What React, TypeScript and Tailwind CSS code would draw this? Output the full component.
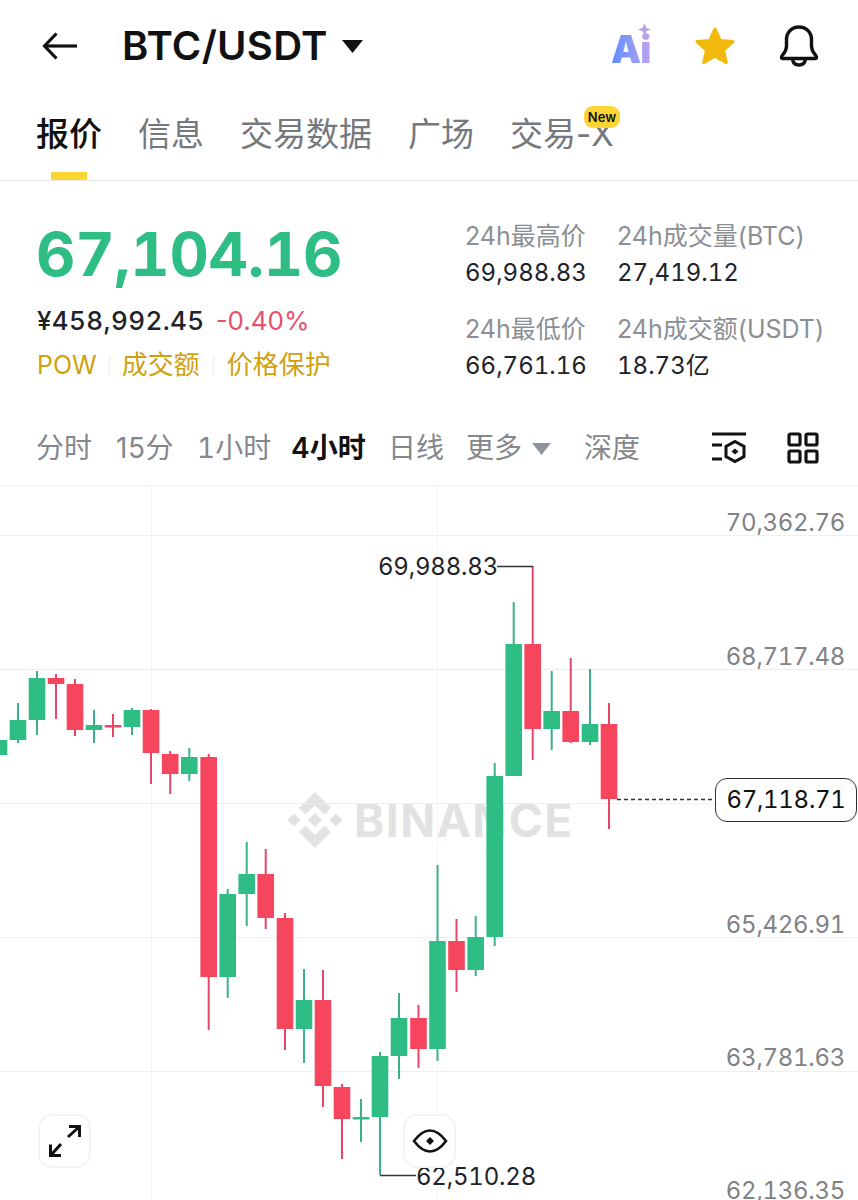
import React from "react";

type C = [number, "g" | "r", number, number, number, number];
// x, colour, wickTop, wickBottom, bodyTop, bodyBottom
const candles: C[] = [
  [-1, "g", 735, 760, 740, 755],
  [18, "g", 703, 743, 720, 740],
  [37, "g", 671, 735, 678, 720],
  [56, "r", 674, 719, 678, 684],
  [75, "r", 679, 736, 684, 730],
  [94, "g", 710, 743, 725, 730],
  [113, "r", 714, 737, 725, 727.5],
  [132, "g", 708, 735, 710, 727],
  [151, "r", 709, 784, 710, 753],
  [170.2, "r", 751, 794, 754, 774],
  [189.3, "g", 748, 781, 757, 774],
  [208.7, "r", 754, 1030, 757, 977],
  [227.7, "g", 889, 998, 894, 977],
  [246.7, "g", 842, 926, 874, 894],
  [265.7, "r", 849, 929, 874, 918],
  [285, "r", 913, 1050, 918, 1029],
  [304, "g", 969, 1063, 1000, 1029],
  [323, "r", 970, 1107, 1000, 1086],
  [342, "r", 1084, 1159, 1087, 1119],
  [361, "g", 1099, 1142, 1117, 1119.5],
  [380, "g", 1052, 1175, 1056, 1117],
  [399, "g", 993, 1079, 1018, 1056],
  [418.5, "r", 1005, 1068, 1018, 1049],
  [437.5, "g", 865, 1061, 941, 1049],
  [456.5, "r", 919, 992, 941, 970],
  [475.7, "g", 916, 976, 937, 970],
  [494.7, "g", 763, 946, 776, 937],
  [513.7, "g", 602, 776, 644, 776],
  [532.7, "r", 566, 760, 644, 729],
  [551.7, "g", 671, 750, 711, 729],
  [570.7, "r", 658, 743, 711, 742],
  [590, "g", 669, 745, 724, 742],
  [609, "r", 703, 829, 724, 799],
];

const Font = "[font-family:Inter,'Noto_Sans_CJK_SC',sans-serif]";

function Stat({ label, value, w }: { label: string; value: string; w: string }) {
  return (
    <div className={`${w} flex flex-col gap-[9px]`}>
      <div className="text-[25px] leading-[28px] text-[#8b8f94] whitespace-nowrap">{label}</div>
      <div className="text-[24px] leading-[28px] text-[#1e2329] whitespace-nowrap tabular-nums">{value}</div>
    </div>
  );
}

function Chart() {
  return (
    <div className="relative flex-1 overflow-hidden border-t border-[#f1f2f4] tabular-nums">
      {/* watermark */}
      <div className="absolute left-[287px] top-[306px] flex items-center gap-[11px]">
        <svg width="56" height="56" viewBox="0 0 56 56" fill="#e2e2e2">
          <path d="M28 0 L44 16 L37.5 22.5 L28 13 L18.5 22.5 L12 16 Z" />
          <path d="M28 56 L44 40 L37.5 33.5 L28 43 L18.5 33.5 L12 40 Z" />
          <path d="M7 21.5 L13.5 28 L7 34.5 L0.5 28 Z" />
          <path d="M49 21.5 L55.5 28 L49 34.5 L42.5 28 Z" />
          <path d="M28 21 L35 28 L28 35 L21 28 Z" />
        </svg>
        <span className="text-[46px] leading-none font-bold text-[#e2e2e2] tracking-[1.4px] whitespace-nowrap">BINANCE</span>
      </div>
      <svg className="absolute inset-0" width="858" height="714" viewBox="0 486 858 714">
        {[535, 669, 803, 937, 1071].map((y) => (
          <line key={y} x1="0" x2="858" y1={y + 0.5} y2={y + 0.5} stroke="#eeeff1" strokeWidth="1" />
        ))}
        {[151.5, 437.5].map((x) => (
          <line key={x} x1={x} x2={x} y1="486" y2="1200" stroke="#f3f4f5" strokeWidth="1" />
        ))}
        {candles.map(([x, c, wt, wb, bt, bb]) => {
          const col = c === "g" ? "#2ebd85" : "#f6465d";
          return (
            <g key={x}>
              <rect x={x - 1} y={wt} width="2" height={wb - wt} fill={c === "g" ? "#3bb08a" : "#e5476a"} />
              <rect x={x - 8.3} y={bt} width="16.6" height={bb - bt} fill={col} />
            </g>
          );
        })}
        <path d="M497 566.5 H533" stroke="#333" strokeWidth="1.4" fill="none" />
        <path d="M380 1175.5 H416" stroke="#333" strokeWidth="1.4" fill="none" />
        <path d="M617 799.5 H715" stroke="#333" strokeWidth="1.3" strokeDasharray="4 3" fill="none" />
      </svg>

      {/* price scale */}
      <div className="absolute right-[13px] top-[22px] text-[24px] leading-[30px] tracking-[-0.3px] text-[#7f8286]">70,362.76</div>
      <div className="absolute right-[13px] top-[156px] text-[24px] leading-[30px] tracking-[-0.3px] text-[#7f8286]">68,717.48</div>
      <div className="absolute right-[13px] top-[290px] text-[24px] leading-[30px] tracking-[-0.3px] text-[#d9dbde]">67,072.20</div>
      <div className="absolute right-[13px] top-[424px] text-[24px] leading-[30px] tracking-[-0.3px] text-[#7f8286]">65,426.91</div>
      <div className="absolute right-[13px] top-[557px] text-[24px] leading-[30px] tracking-[-0.3px] text-[#7f8286]">63,781.63</div>
      <div className="absolute right-[13px] top-[690px] text-[24px] leading-[30px] tracking-[-0.3px] text-[#7f8286]">62,136.35</div>

      {/* current price tag */}
      <div className="absolute left-[715px] top-[292px] w-[142px] h-[44px] rounded-[12px] border-[1.5px] border-[#2b2f36] bg-white/85 flex items-center justify-center text-[24px] tracking-[-0.3px] text-[#111]">
        67,118.71
      </div>

      {/* hi / lo */}
      <div className="absolute left-[378px] top-[66px] text-[24px] leading-[30px] tracking-[-0.2px] text-[#1e2329]">69,988.83</div>
      <div className="absolute left-[416px] top-[676px] text-[24px] leading-[30px] tracking-[-0.2px] text-[#1e2329]">62,510.28</div>

      {/* floating buttons */}
      <button className="absolute left-[38px] top-[628px] w-[53px] h-[54px] rounded-[14px] border-2 border-[#f2f3f4] bg-white flex items-center justify-center">
        <svg width="36" height="36" viewBox="0 0 36 36" fill="none" stroke="#111" strokeWidth="3">
          <path d="M21 14 L32 4 M22 3.5 H32.5 V14" />
          <path d="M14 21 L4 32 M3.5 21.5 V32.5 H14" />
        </svg>
      </button>
      <button className="absolute left-[403px] top-[628px] w-[53px] h-[54px] rounded-[14px] border-2 border-[#f2f3f4] bg-white/90 flex items-center justify-center">
        <svg width="36" height="24" viewBox="0 0 36 24" fill="none" stroke="#111" strokeWidth="2.6">
          <path d="M2 12 C8 4 13 1.5 18 1.5 C23 1.5 28 4 34 12 C28 20 23 22.5 18 22.5 C13 22.5 8 20 2 12 Z" />
          <path d="M18 8 L22 12 L18 16 L14 12 Z" fill="#111" stroke="none" />
        </svg>
      </button>
    </div>
  );
}

export default function App() {
  return (
    <div className={`${Font} w-[858px] h-[1200px] bg-white overflow-hidden flex flex-col`}>
      {/* header */}
      <div className="h-[92px] flex items-center pl-[42px] pr-[39px] shrink-0">
        <svg width="36" height="28" viewBox="0 0 36 28" fill="none" stroke="#111" strokeWidth="3.2">
          <path d="M35 14 H3" />
          <path d="M14.5 1.5 L2.5 14 L14.5 26.5" />
        </svg>
        <div className="ml-[44px] text-[40px] leading-none font-semibold text-[#111] tracking-[0.3px] whitespace-nowrap">BTC/USDT</div>
        <svg className="ml-[14px]" width="21" height="13" viewBox="0 0 21 13" fill="#111">
          <path d="M0 0 H21 L10.5 13 Z" />
        </svg>
        <div className="ml-auto flex items-center">
          <div className="relative w-[42px] h-[40px] mr-[41px]">
            <div className="absolute left-0 top-[3px] text-[38px] leading-[40px] font-black bg-gradient-to-r from-[#5b8cff] to-[#b9a3ec] bg-clip-text text-transparent tracking-[-1px]">
              Ai
            </div>
            <svg className="absolute left-[27px] top-[-3px]" width="13" height="13" viewBox="0 0 12 12" fill="#b7a0e6">
              <path d="M6 0 L7.6 4.4 L12 6 L7.6 7.6 L6 12 L4.4 7.6 L0 6 L4.4 4.4 Z" />
            </svg>
          </div>
          <svg className="mr-[43px]" width="42" height="40" viewBox="0 0 42 40" fill="#f0b90b" stroke="#f0b90b" strokeWidth="3" strokeLinejoin="round">
            <path d="M21 3 L26.3 14.4 L39 15.6 L29.6 24.2 L32.3 36.6 L21 30.2 L9.7 36.6 L12.4 24.2 L3 15.6 L15.7 14.4 Z" />
          </svg>
          <svg width="40" height="42" viewBox="0 0 40 42" fill="none" stroke="#111" strokeWidth="3.4" strokeLinejoin="round" strokeLinecap="round">
            <path d="M2.5 32 C2.5 29.5 7.5 28 7.5 21 V14.5 C7.5 7 13 2 20 2 C27 2 32.5 7 32.5 14.5 V21 C32.5 28 37.5 29.5 37.5 32 C37.5 33 37 33.5 36 33.5 H4 C3 33.5 2.5 33 2.5 32 Z" />
            <path d="M13.5 34 C14 38 16.5 40 20 40 C23.5 40 26 38 26.5 34" />
          </svg>
        </div>
      </div>

      {/* tabs */}
      <div className="relative h-[89px] shrink-0 flex gap-[36px] pl-[36px] pt-[23px] border-b border-[#e9eaec] text-[33px] leading-[38px] text-[#75787c]">
        <div className="relative text-[#111] font-medium">
          报价
          <div className="absolute left-[15px] top-[57px] w-[36px] h-[8px] bg-[#fcd535]" />
        </div>
        <div>信息</div>
        <div>交易数据</div>
        <div>广场</div>
        <div className="relative whitespace-nowrap">
          交易-X
          <div className="absolute left-[74px] top-[-9px] w-[36px] h-[22px] rounded-[9px] bg-[#fcd535] flex items-center justify-center text-[13px] leading-none font-semibold text-[#111]">
            New
          </div>
        </div>
      </div>

      {/* stats */}
      <div className="h-[225px] shrink-0 flex pl-[37px]">
        <div className="w-[428px] pt-[36px]">
          <div className="ml-[-1px] text-[61px] leading-[74px] font-bold text-[#2ebd85] tabular-nums tracking-[-0.3px]">67,104.16</div>
          <div className="mt-[14px] flex items-center gap-[11px] h-[30px]">
            <span className="text-[26px] font-medium text-[#1e2329] tabular-nums tracking-[0.4px]">¥458,992.45</span>
            <span className="text-[26px] text-[#e5526d]">-0.40%</span>
          </div>
          <div className="mt-[15px] flex items-center text-[26px] leading-[30px] text-[#cfa10f]">
            <span className="text-[25px]">POW</span>
            <span className="mx-[12px] w-px h-[18px] bg-[#eeeff1]" />
            <span>成交额</span>
            <span className="mx-[13px] w-px h-[18px] bg-[#eeeff1]" />
            <span>价格保护</span>
          </div>
        </div>
        <div className="pt-[41px] flex flex-col gap-[28px]">
          <div className="flex">
            <Stat w="w-[152px]" label="24h最高价" value="69,988.83" />
            <Stat w="w-[230px]" label="24h成交量(BTC)" value="27,419.12" />
          </div>
          <div className="flex">
            <Stat w="w-[152px]" label="24h最低价" value="66,761.16" />
            <Stat w="w-[230px]" label="24h成交额(USDT)" value="18.73亿" />
          </div>
        </div>
      </div>

      {/* time frames */}
      <div className="h-[79px] shrink-0 flex items-center pl-[36px] pr-[39px] text-[28px] leading-none text-[#84878c] pt-[4px]">
        <span className="w-[79px]">分时</span>
        <span className="w-[82px] tracking-[0.5px] pl-[1px]">15分</span>
        <span className="w-[94px] tabular-nums">1小时</span>
        <span className="w-[97px] font-semibold text-[#111]">4小时</span>
        <span className="w-[78px]">日线</span>
        <span>更多</span>
        <svg className="ml-[10px] mt-[2px]" width="19" height="12" viewBox="0 0 19 12" fill="#8f959e">
          <path d="M0 0 H19 L9.5 12 Z" />
        </svg>
        <span className="ml-[33px]">深度</span>
        <svg className="ml-auto mr-[1px]" width="36" height="32" viewBox="0 0 36 32" fill="none" stroke="#111" strokeWidth="3">
          <path d="M1 2 H35" />
          <path d="M1 13 H11 M1 27 H11" />
          <path d="M24 9.5 L33 14.5 V24.5 L24 29.5 L15 24.5 V14.5 Z" />
          <path d="M24 16.5 L27.5 19.5 L24 22.5 L20.5 19.5 Z" fill="#111" stroke="none" />
        </svg>
        <svg className="ml-[39px]" width="32" height="32" viewBox="0 0 32 32" fill="none" stroke="#111" strokeWidth="3.2">
          <rect x="2" y="2" width="11" height="11" rx="1.5" />
          <rect x="19" y="2" width="11" height="11" rx="1.5" />
          <rect x="2" y="19" width="11" height="11" rx="1.5" />
          <rect x="19" y="19" width="11" height="11" rx="1.5" />
        </svg>
      </div>

      <Chart />
    </div>
  );
}
